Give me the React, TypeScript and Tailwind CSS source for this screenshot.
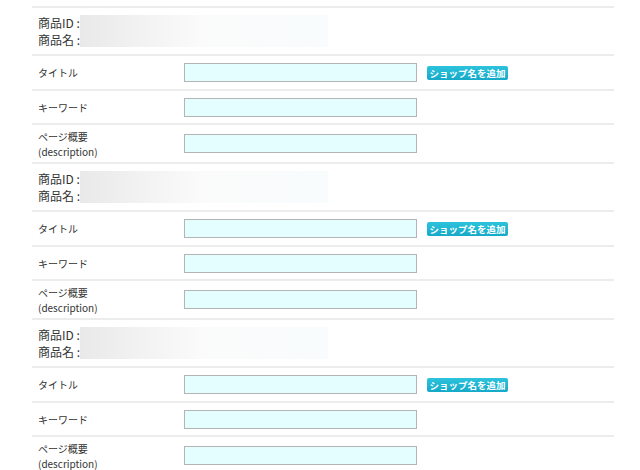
const ITEMS = [1, 2, 3];

function FieldRow({ label, sub, withButton, className }: { label: string; sub?: string; withButton?: boolean; className: string }) {
  return (
    <div className={`flex items-center border-b-2 border-[#ececec] ${className}`}>
      <p className="w-[152px] shrink-0 pl-[6px] text-[10px] leading-[15px] text-[#333]">
        {label}
        {sub && <br />}
        {sub}
      </p>
      <input
        type="text"
        className="h-[19px] w-[233px] shrink-0 border border-[#b4b4b4] bg-[#e4feff] outline-none"
      />
      {withButton && (
        <button className="ml-[10px] h-[14px] w-[81px] shrink-0 whitespace-nowrap rounded-[2px] bg-gradient-to-b from-[#2cc3dc] to-[#14a9c8] text-center text-[9.5px] font-bold leading-[14px] text-white">
          ショップ名を追加
        </button>
      )}
    </div>
  );
}

function ProductBlock() {
  return (
    <div>
      <div className="flex h-[48px] items-center border-b-2 border-[#ececec] pl-[6px]">
        <p className="text-[12px] leading-[17px] text-[#333]">
          商品ID :<br />
          商品名 :
        </p>
        <div className="h-[32px] w-[248px] bg-gradient-to-r from-[#e9e9e9] via-[#fbfbfb] to-[#f8fcfd]" />
      </div>
      <FieldRow label="タイトル" withButton className="h-[35px]" />
      <FieldRow label="キーワード" className="h-[34px]" />
      <FieldRow label="ページ概要" sub="(description)" className="h-[39px]" />
    </div>
  );
}

export default function App() {
  return (
    <div className="h-[470px] w-[640px] overflow-hidden bg-white font-['Noto_Sans_CJK_JP',sans-serif]">
      <div className="ml-[32px] mt-[6px] w-[582px] border-t-2 border-[#ececec]">
        {ITEMS.map((i) => (
          <ProductBlock key={i} />
        ))}
      </div>
    </div>
  );
}
